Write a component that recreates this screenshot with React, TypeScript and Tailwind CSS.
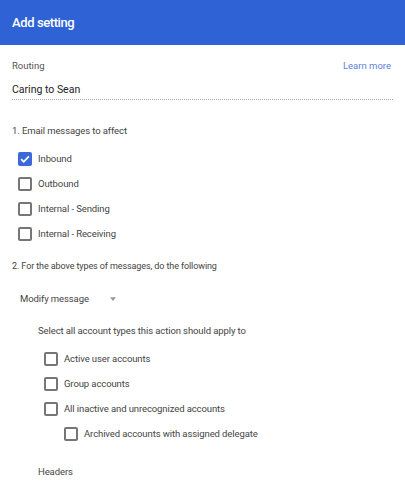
import React from "react";

function Box({ checked }: { checked?: boolean }) {
  if (checked) {
    return (
      <span className="flex h-[14px] w-[14px] shrink-0 items-center justify-center rounded-[2px] bg-[#3b6ad8]">
        <svg viewBox="0 0 14 14" className="h-[12px] w-[12px]" fill="none" stroke="white" strokeWidth="2">
          <path d="M2.5 7.2l3 3 6-6.2" />
        </svg>
      </span>
    );
  }
  return <span className="h-[14px] w-[14px] shrink-0 rounded-[2px] border-2 border-[#767676]" />;
}

function Row({ label, checked, className }: { label: string; checked?: boolean; className?: string }) {
  return (
    <div className={`flex h-[25px] items-center gap-[6px] ${className ?? ""}`}>
      <Box checked={checked} />
      <span className="text-[9.5px] leading-[14px] tracking-[-0.1px] text-[#444]">{label}</span>
    </div>
  );
}

export default function App() {
  const emailTypes = [
    { label: "Inbound", checked: true },
    { label: "Outbound" },
    { label: "Internal - Sending" },
    { label: "Internal - Receiving" },
  ];

  return (
    <div className="h-[494px] w-[405px] overflow-hidden bg-white font-['Roboto',sans-serif]">
      {/* Header */}
      <div className="flex h-[45px] items-center bg-[#2f62d4] px-3">
        <h1 className="text-[13px] font-medium tracking-[-0.4px] text-white">Add setting</h1>
      </div>

      <div className="px-3">
        {/* Routing */}
        <div className="mt-[14px] flex items-center justify-between leading-[14px]">
          <span className="text-[9.5px] text-[#555]">Routing</span>
          <a className="mr-[2px] text-[9.5px] text-[#5b7fd6]">Learn more</a>
        </div>
        <div className="mt-[9px] border-b border-dotted border-[#aaa] pb-[1px] text-[10.5px] leading-[16px] text-[#222]">
          Caring to Sean
        </div>

        {/* Section 1 */}
        <p className="mt-[24px] text-[9.5px] leading-[14px] tracking-[-0.1px] text-[#444]">
          1. Email messages to affect
        </p>
        <div className="mt-[8px] pl-[6px]">
          {emailTypes.map((t) => (
            <Row key={t.label} label={t.label} checked={t.checked} />
          ))}
        </div>

        {/* Section 2 */}
        <p className="mt-[13px] text-[9px] leading-[14px] tracking-[-0.1px] text-[#444]">
          2. For the above types of messages, do the following
        </p>
        <div className="mt-[19px] flex items-center pl-[8px] leading-[14px]">
          <span className="text-[9.5px] tracking-[-0.1px] text-[#444]">Modify message</span>
          <svg viewBox="0 0 8 5" className="ml-[21px] h-[4px] w-[6px]" fill="#999">
            <path d="M0 0h8L4 5z" />
          </svg>
        </div>

        <div className="pl-[26px]">
          <p className="mt-[18px] text-[9.5px] leading-[14px] tracking-[-0.1px] text-[#444]">
            Select all account types this action should apply to
          </p>
          <div className="mt-[8px] pl-[6px]">
            <Row label="Active user accounts" />
            <Row label="Group accounts" />
            <Row label="All inactive and unrecognized accounts" />
            <Row label="Archived accounts with assigned delegate" className="pl-[20px]" />
          </div>
          <p className="mt-[19px] text-[9.5px] leading-[14px] tracking-[-0.1px] text-[#444]">Headers</p>
        </div>
      </div>
    </div>
  );
}
